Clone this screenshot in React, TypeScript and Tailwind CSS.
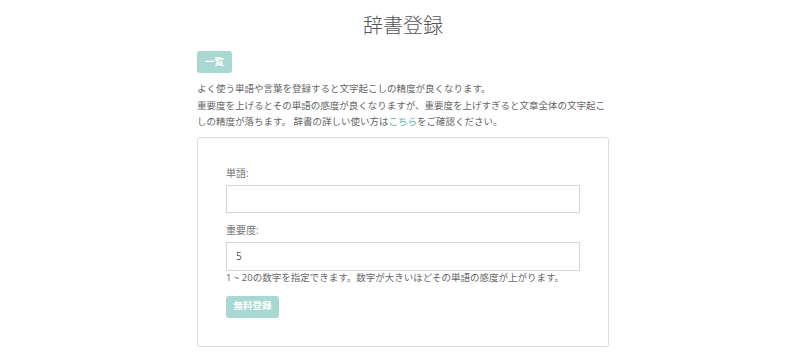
import React from 'react';

export default function App() {
  return (
    <div className="min-h-[361px] bg-white pl-[6px]" style={{ fontFamily: '"Open Sans", "Noto Sans CJK JP", sans-serif' }}>
      <div className="w-[412px] mx-auto">
        <h1 className="pt-[13px] text-center text-[20px] leading-[26px] font-light text-[#555]">辞書登録</h1>

        <button className="mt-[12px] w-[35px] h-[22px] rounded-[3px] bg-[#a8d8d1] text-white text-[9.5px] font-bold">
          一覧
        </button>

        <p className="mt-[8px] text-[9.5px] leading-[16.5px] text-[#666]">
          よく使う単語や言葉を登録すると文字起こしの精度が良くなります。
          <br />
          重要度を上げるとその単語の感度が良くなりますが、重要度を上げすぎると文章全体の文字起こしの精度が落ちます。 辞書の詳しい使い方は<a className="text-[#5fb5a9]">こちら</a>をご確認ください。
        </p>

        <div className="mt-[6px] border border-[#dcdcdc] rounded-[3px] px-[28px] pt-[28px] pb-[28px]">
          <label className="block text-[10px] leading-[14px] text-[#777]">単語:</label>
          <input className="mt-[5px] block w-full h-[28px] border border-[#d6d6d6] px-[10px] text-[10px] text-[#555] outline-none" />

          <label className="mt-[10px] block text-[10px] leading-[14px] text-[#777]">重要度:</label>
          <input
            defaultValue="5"
            className="mt-[5px] block w-full h-[29px] border border-[#d6d6d6] px-[9px] text-[10px] text-[#555] outline-none"
          />
          <p className="text-[9.5px] leading-[14px] text-[#666]">
            1 ~ 20の数字を指定できます。数字が大きいほどその単語の感度が上がります。
          </p>

          <button className="mt-[11px] w-[53px] h-[22px] rounded-[3px] bg-[#a8d8d1] text-white text-[9.5px] font-bold">
            無料登録
          </button>
        </div>
      </div>
    </div>
  );
}
